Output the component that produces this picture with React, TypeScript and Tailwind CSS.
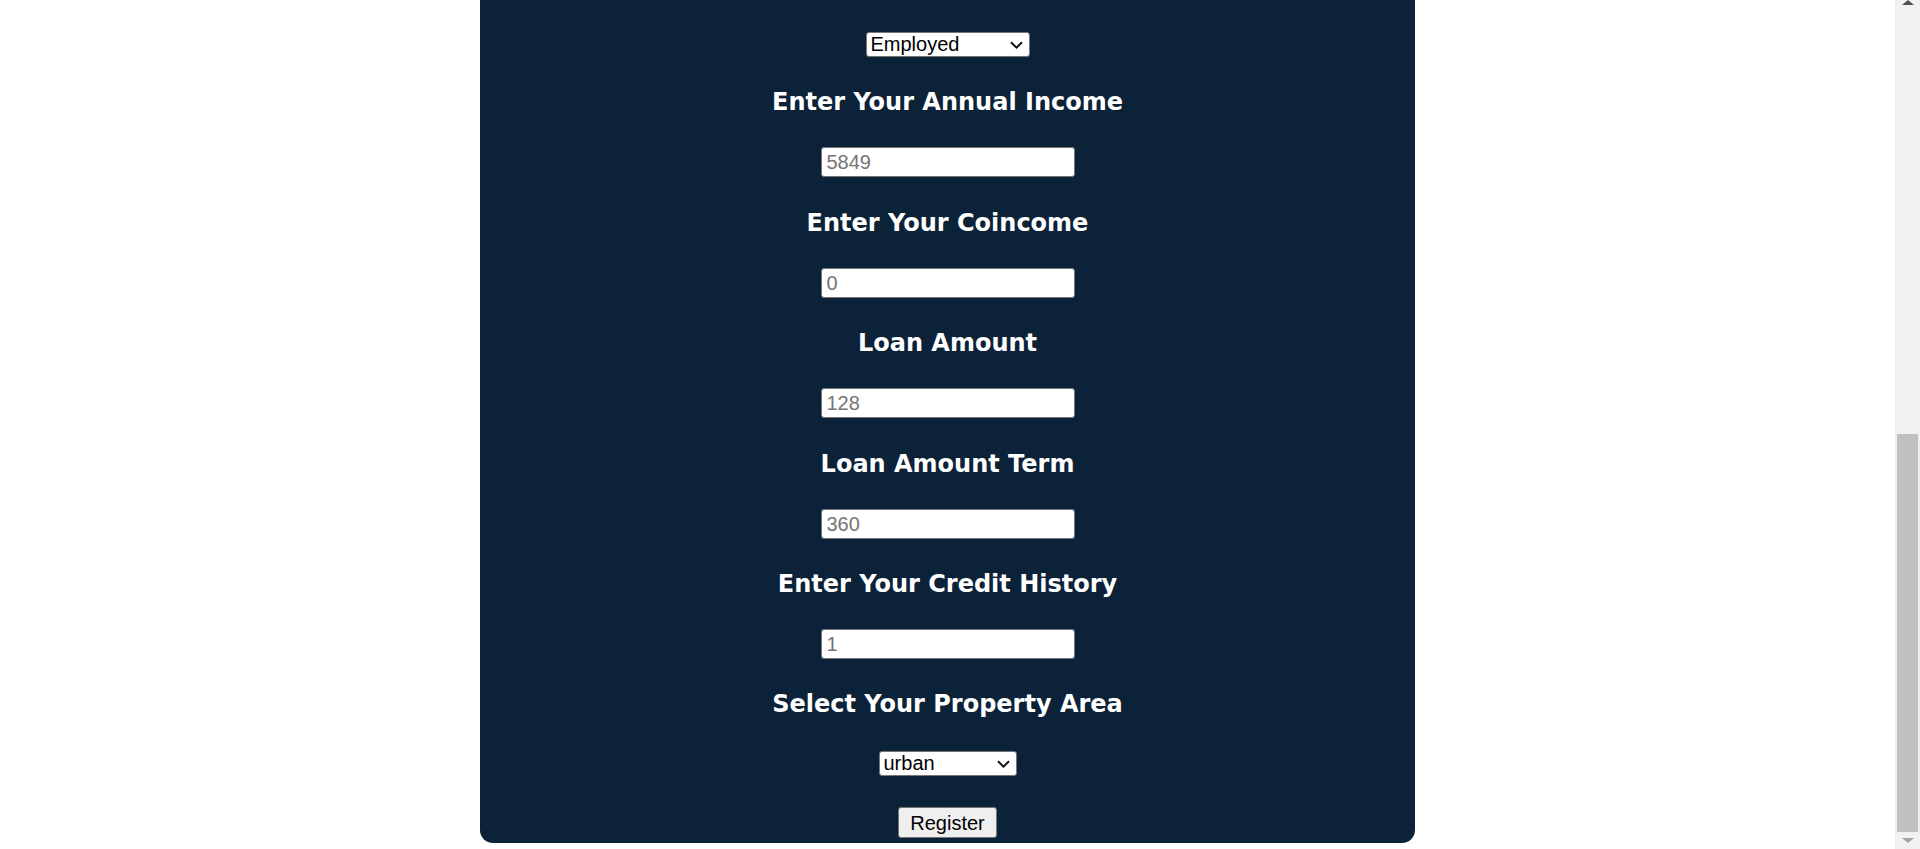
import React from "react";

const Chevron = () => (
  <svg width="13" height="8" viewBox="0 0 13 8" className="pointer-events-none absolute right-[7px] top-1/2 -translate-y-1/2">
    <path d="M1 1.2 L6.5 6.6 L12 1.2" fill="none" stroke="#111" strokeWidth="2" />
  </svg>
);

function Select({ value, options, width }: { value: string; options: string[]; width: string }) {
  return (
    <div className={`relative h-[25px] ${width}`}>
      <select
        defaultValue={value}
        className="h-full w-full appearance-none rounded-[3px] border border-[#767676] bg-white pl-[4px] text-[20px] leading-[23px] text-black outline-none"
        style={{ fontFamily: '"Liberation Sans", Arial, sans-serif' }}
      >
        {options.map((o) => (
          <option key={o}>{o}</option>
        ))}
      </select>
      <Chevron />
    </div>
  );
}

function Heading({ children, mt }: { children: React.ReactNode; mt: string }) {
  return (
    <h2
      className={`${mt} h-[28px] text-[24px] font-bold leading-[28px] text-white`}
      style={{ fontFamily: '"DejaVu Sans", Verdana, sans-serif' }}
    >
      {children}
    </h2>
  );
}

function Field({ placeholder }: { placeholder: string }) {
  return (
    <input
      type="text"
      placeholder={placeholder}
      className="mt-[31px] h-[30px] w-[254px] rounded-[3px] border border-[#767676] bg-white px-[5px] text-[20px] text-black outline-none placeholder:text-[#757575]"
      style={{ fontFamily: '"Liberation Sans", Arial, sans-serif' }}
    />
  );
}

export default function App() {
  return (
    <div className="flex h-[849px] w-[1920px] overflow-hidden bg-white">
      <div className="flex-1">
        <div className="mx-auto flex w-[935px] flex-col items-center rounded-b-[13px] bg-[#0c2238] pb-[5px] pt-[32px]">
          <Select value="Employed" options={["Employed", "Self Employed"]} width="w-[164px]" />
          <Heading mt="mt-[31px]">Enter Your Annual Income</Heading>
          <Field placeholder="5849" />
          <Heading mt="mt-[31.6px]">Enter Your Coincome</Heading>
          <Field placeholder="0" />
          <Heading mt="mt-[31.6px]">Loan Amount</Heading>
          <Field placeholder="128" />
          <Heading mt="mt-[31.6px]">Loan Amount Term</Heading>
          <Field placeholder="360" />
          <Heading mt="mt-[31.6px]">Enter Your Credit History</Heading>
          <Field placeholder="1" />
          <Heading mt="mt-[31px]">Select Your Property Area</Heading>
          <div className="mt-[33px]">
            <Select value="urban" options={["urban", "semiurban", "rural"]} width="w-[138px]" />
          </div>
          <button
            type="button"
            className="mt-[31px] h-[31px] w-[99px] rounded-[3px] border border-[#767676] bg-[#efefef] text-[20px] text-black"
            style={{ fontFamily: '"Liberation Sans", Arial, sans-serif' }}
          >
            Register
          </button>
        </div>
      </div>
      <div className="flex w-[25px] flex-col bg-[#f1f1f1]">
        <div className="flex h-[17px] items-start justify-center">
          <svg width="12" height="5" viewBox="0 0 12 5">
            <path d="M0 5 L6 0 L12 5 Z" fill="#505050" />
          </svg>
        </div>
        <div className="flex-1" />
        <div className="mx-[2px] h-[398px] bg-[#c1c1c1]" />
        <div className="flex h-[17px] items-center justify-center">
          <svg width="12" height="5" viewBox="0 0 12 5">
            <path d="M0 0 L12 0 L6 5 Z" fill="#a3a3a3" />
          </svg>
        </div>
      </div>
    </div>
  );
}
